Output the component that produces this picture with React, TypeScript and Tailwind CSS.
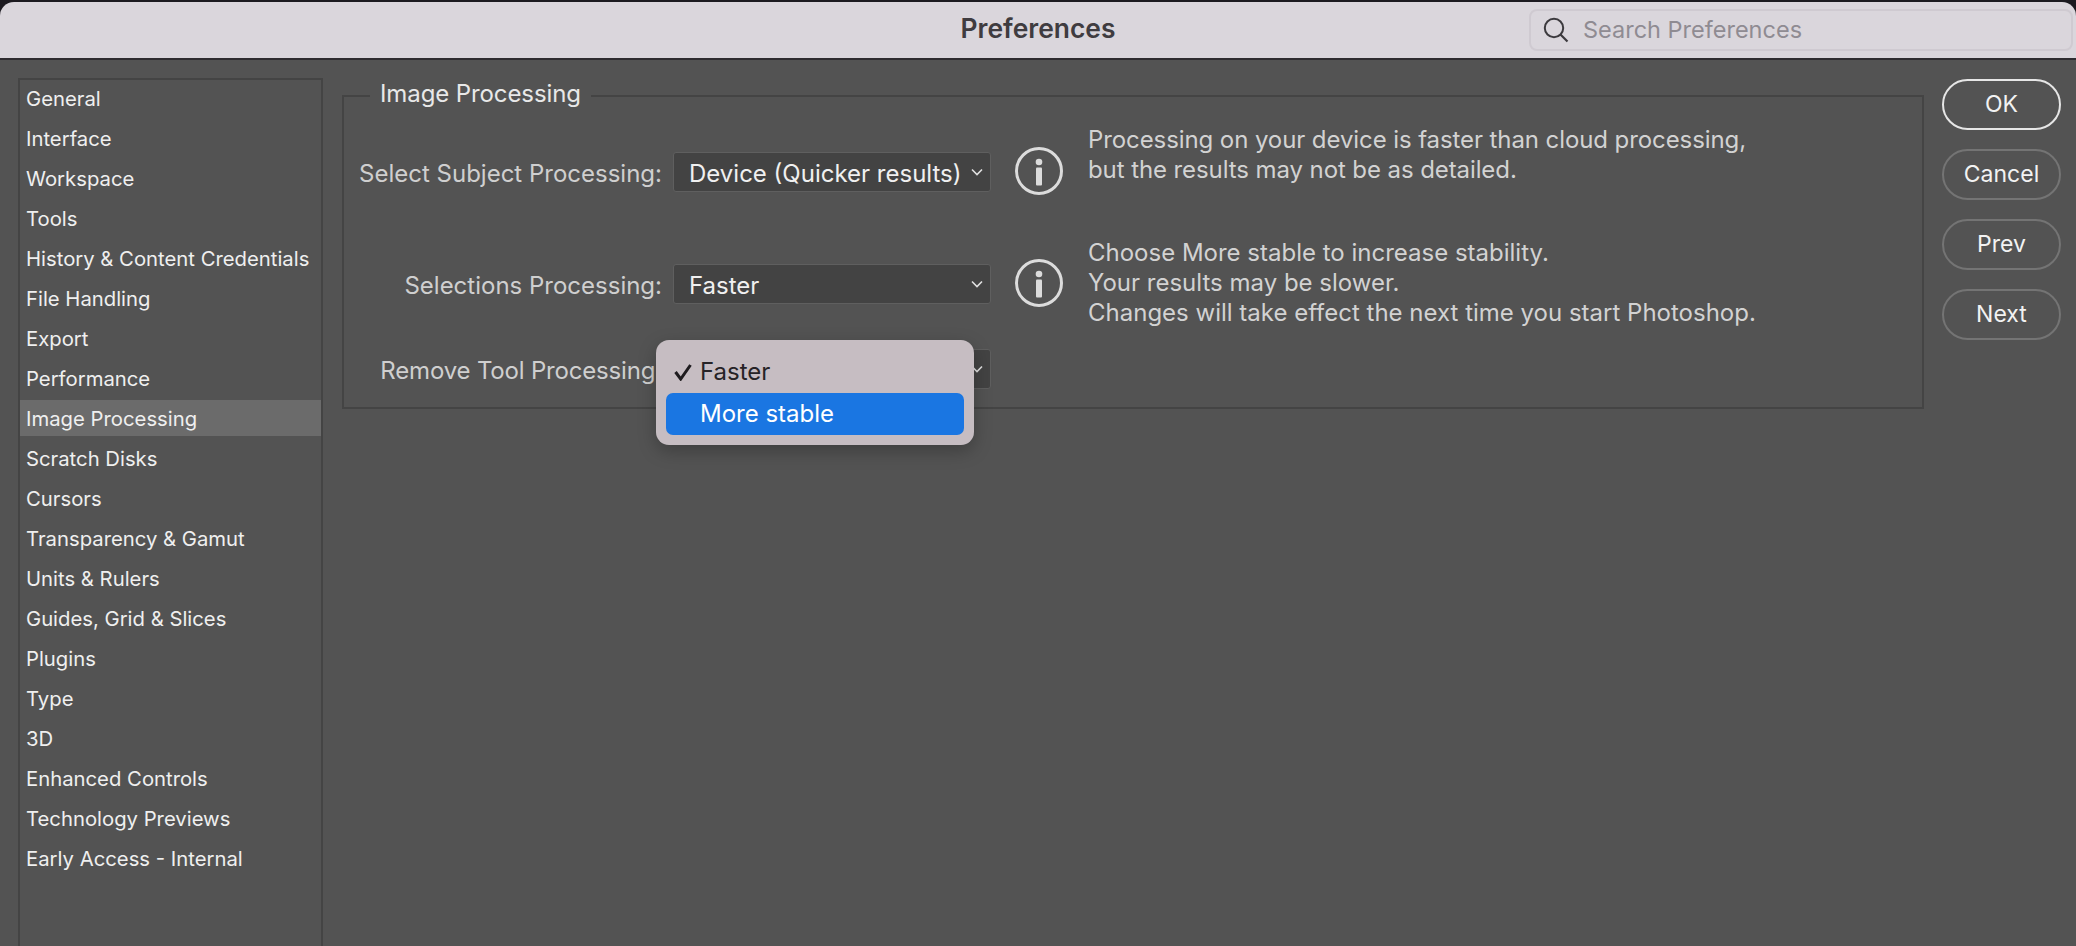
import React from "react";

const categories = [
  "General",
  "Interface",
  "Workspace",
  "Tools",
  "History & Content Credentials",
  "File Handling",
  "Export",
  "Performance",
  "Image Processing",
  "Scratch Disks",
  "Cursors",
  "Transparency & Gamut",
  "Units & Rulers",
  "Guides, Grid & Slices",
  "Plugins",
  "Type",
  "3D",
  "Enhanced Controls",
  "Technology Previews",
  "Early Access - Internal",
];

const InfoIcon = () => (
  <svg width="48" height="48" viewBox="0 0 48 48" className="ml-6 -mt-[5px] shrink-0" fill="none">
    <circle cx="24" cy="24" r="22.5" stroke="#dcdcdc" strokeWidth="3" />
    <circle cx="24" cy="15" r="3.3" fill="#dcdcdc" />
    <rect x="21" y="20.5" width="6" height="18" rx="1" fill="#dcdcdc" />
  </svg>
);

const Select = ({ value }: { value: string }) => (
  <div className="w-[318px] h-10 shrink-0 flex items-center justify-between pl-[15px] pr-[7px] bg-[#434343] border border-[#5f5f5f] rounded-[3px] text-[24px] text-[#f0f0f0]">
    <span className="whitespace-nowrap pt-[3px]">{value}</span>
    <svg width="12" height="8" viewBox="0 0 12 8" fill="none" className="shrink-0">
      <path d="M1 1.5 L6 6.5 L11 1.5" stroke="#e0e0e0" strokeWidth="1.6" />
    </svg>
  </div>
);

const Label = ({ text, className = "" }: { text: string; className?: string }) => (
  <div className={`w-[318px] mr-[11px] pt-[2px] shrink-0 text-right text-[24px] leading-10 text-[#cfcfcf] whitespace-nowrap ${className}`}>
    {text}
  </div>
);

const Note = ({ lines, className }: { lines: string[]; className: string }) => (
  <div className={`ml-[25px] text-[24px] leading-[30px] text-[#d2d2d2] whitespace-nowrap ${className}`}>
    {lines.map((l) => (
      <div key={l}>{l}</div>
    ))}
  </div>
);

const ActionButton = ({ label, primary }: { label: string; primary?: boolean }) => (
  <button
    className={`w-[119px] h-[51px] rounded-full border-2 text-[23px] text-[#f2f2f2] ${
      primary ? "border-[#e6e6e6]" : "border-[#747474]"
    }`}
  >
    {label}
  </button>
);

export default function App() {
  return (
    <div
      className="w-[2076px] h-[946px] overflow-hidden bg-[#1c1a20] pt-[2px] flex flex-col"
      style={{ fontFamily: "Inter, 'Noto Sans', sans-serif" }}
    >
      {/* Title bar */}
      <div className="h-[58px] shrink-0 grid grid-cols-[1fr_auto_1fr] items-center bg-[#dad6dc] rounded-t-[14px] border-b-2 border-[#2e2c30]">
        <div />
        <div className="text-[26.4px] font-semibold text-[#3f3c40] -mt-[2px]">Preferences</div>
        <div className="flex justify-end pr-[3px]">
          <div className="w-[544px] h-[42px] flex items-center gap-[14px] pl-[12px] border-2 border-[#cfcad1] rounded-[8px] -mt-[1px]">
            <svg width="26" height="26" viewBox="0 0 26 26" fill="none">
              <circle cx="11" cy="11" r="9.2" stroke="#3c3a3e" strokeWidth="2" />
              <path d="M17.5 17.5 L24.5 24.5" stroke="#3c3a3e" strokeWidth="2.2" />
            </svg>
            <span className="text-[23.5px] text-[#8f8b92]">Search Preferences</span>
          </div>
        </div>
      </div>

      <div className="flex-1 flex bg-[#535353] pl-[18px] min-h-0">
        {/* Category list */}
        <div className="w-[305px] shrink-0 mt-[18px] border-2 border-b-0 border-[#444444]">
          {categories.map((c) => (
            <div
              key={c}
              className={`h-9 mb-1 pl-[6px] pt-[2px] flex items-center text-[20.3px] text-[#efefef] whitespace-nowrap ${
                c === "Image Processing" ? "bg-[#6b6b6b]" : ""
              }`}
            >
              {c}
            </div>
          ))}
        </div>

        {/* Settings group */}
        <fieldset className="w-[1582px] h-[329px] ml-[19px] mt-[20px] shrink-0 border-2 border-[#444444]">
          <legend className="ml-[26px] px-[10px] pb-[4px] text-[24px] leading-[28px] text-[#e8e8e8] tracking-[-0.1px]">Image Processing</legend>

          <div className="flex items-start h-10 mt-[40px]">
            <Label text="Select Subject Processing:" />
            <Select value="Device (Quicker results)" />
            <InfoIcon />
            <Note
              className="-mt-[27px] tracking-[-0.09px]"
              lines={[
                "Processing on your device is faster than cloud processing,",
                "but the results may not be as detailed.",
              ]}
            />
          </div>

          <div className="flex items-start h-10 mt-[72px]">
            <Label text="Selections Processing:" />
            <Select value="Faster" />
            <InfoIcon />
            <Note
              className="-mt-[26px]"
              lines={[
                "Choose More stable to increase stability.",
                "Your results may be slower.",
                "Changes will take effect the next time you start Photoshop.",
              ]}
            />
          </div>

          <div className="relative flex items-start h-10 mt-[45px]">
            <Label text="Remove Tool Processing:" className="tracking-[-0.18px]" />
            <Select value="Faster" />

            {/* Open dropdown */}
            <div className="absolute left-[312px] -top-[9px] w-[318px] p-[10px] pt-[11px] bg-[#c6bdc2] rounded-[13px] shadow-[0_6px_18px_rgba(0,0,0,0.25)] text-[24px]">
              <div className="relative h-[42px] pl-[34px] flex items-center text-[#262326]">
                <svg width="18" height="18" viewBox="0 0 18 18" fill="none" className="absolute left-[8px] top-[12px]">
                  <path d="M1.5 9 L6.7 16 L16.5 2" stroke="#1f1c1f" strokeWidth="3" />
                </svg>
                Faster
              </div>
              <div className="h-[42px] pl-[34px] flex items-center bg-[#1a76e2] rounded-[7px] text-white">More stable</div>
            </div>
          </div>
        </fieldset>

        {/* Buttons */}
        <div className="w-[119px] ml-[18px] mt-[19px] shrink-0 flex flex-col gap-[19px]">
          <ActionButton label="OK" primary />
          <ActionButton label="Cancel" />
          <ActionButton label="Prev" />
          <ActionButton label="Next" />
        </div>
      </div>
    </div>
  );
}
